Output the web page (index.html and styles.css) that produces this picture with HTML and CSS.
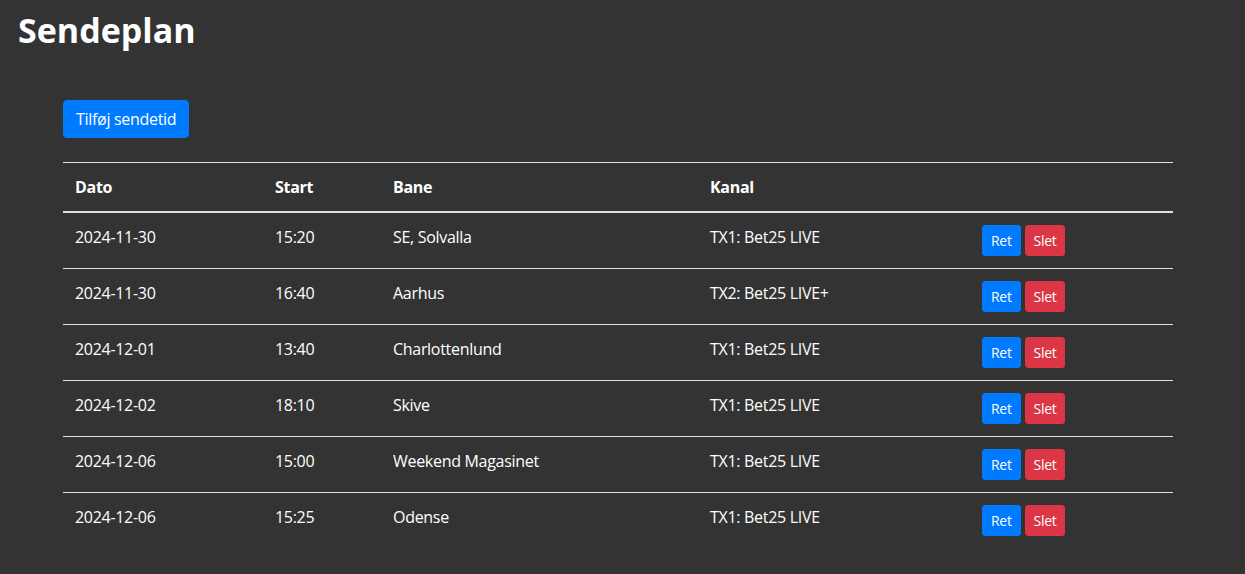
FILE: index.html
```html
<!DOCTYPE html>
<html lang="da">
<head>
<meta charset="utf-8">
<title>Sendeplan</title>
<link rel="stylesheet" href="styles.css">
</head>
<body>
<header class="page-header">
  <h1 class="page-title">Sendeplan</h1>
</header>
<main class="content">
  <div class="toolbar">
    <button class="btn btn-primary">Tilføj sendetid</button>
  </div>
  <table class="schedule">
    <colgroup>
      <col class="c-date"><col class="c-start"><col class="c-track"><col class="c-channel"><col class="c-actions">
    </colgroup>
    <thead>
      <tr><th>Dato</th><th>Start</th><th>Bane</th><th>Kanal</th><th></th></tr>
    </thead>
    <tbody>
      <tr><td>2024-11-30</td><td>15:20</td><td>SE, Solvalla</td><td>TX1: Bet25 LIVE</td><td class="actions"><button class="btn-sm btn-primary">Ret</button><button class="btn-sm btn-danger">Slet</button></td></tr>
      <tr><td>2024-11-30</td><td>16:40</td><td>Aarhus</td><td>TX2: Bet25 LIVE+</td><td class="actions"><button class="btn-sm btn-primary">Ret</button><button class="btn-sm btn-danger">Slet</button></td></tr>
      <tr><td>2024-12-01</td><td>13:40</td><td>Charlottenlund</td><td>TX1: Bet25 LIVE</td><td class="actions"><button class="btn-sm btn-primary">Ret</button><button class="btn-sm btn-danger">Slet</button></td></tr>
      <tr><td>2024-12-02</td><td>18:10</td><td>Skive</td><td>TX1: Bet25 LIVE</td><td class="actions"><button class="btn-sm btn-primary">Ret</button><button class="btn-sm btn-danger">Slet</button></td></tr>
      <tr><td>2024-12-06</td><td>15:00</td><td>Weekend Magasinet</td><td>TX1: Bet25 LIVE</td><td class="actions"><button class="btn-sm btn-primary">Ret</button><button class="btn-sm btn-danger">Slet</button></td></tr>
      <tr><td>2024-12-06</td><td>15:25</td><td>Odense</td><td>TX1: Bet25 LIVE</td><td class="actions"><button class="btn-sm btn-primary">Ret</button><button class="btn-sm btn-danger">Slet</button></td></tr>
    </tbody>
  </table>
</main>
</body>
</html>
```

FILE: styles.css
```css
* { box-sizing: border-box; }
html, body { margin: 0; padding: 0; }
body {
  background: #333333;
  color: #ffffff;
  font-family: "Open Sans", "Noto Sans", sans-serif;
  font-size: 16px;
  line-height: 24px;
  letter-spacing: -0.3px;
  height: 574px;
  overflow: hidden;
}
.page-header { padding: 10px 18px 0; }
.page-title {
  margin: 0;
  font-family: "Open Sans", sans-serif;
  font-weight: 700;
  font-size: 34px;
  line-height: 40px;
  letter-spacing: 0;
}
.content {
  margin: 50px 0 0 63px;
  width: 1110px;
}
.toolbar { margin-bottom: 24px; }
.btn {
  font-family: inherit;
  font-size: 16px;
  line-height: 24px;
  letter-spacing: -0.3px;
  padding: 6px 12px;
  border: 1px solid transparent;
  border-radius: 4px;
  color: #fff;
  cursor: pointer;
}
.btn-sm {
  font-family: inherit;
  font-size: 14px;
  line-height: 21px;
  letter-spacing: -0.3px;
  padding: 4px 8px;
  border: 1px solid transparent;
  border-radius: 3px;
  color: #fff;
  cursor: pointer;
  margin-right: 4px;
  vertical-align: top;
}
.btn-primary { background: #007bff; border-color: #007bff; }
.btn-danger { background: #dc3545; border-color: #dc3545; }
.schedule {
  width: 1110px;
  border-collapse: collapse;
  table-layout: fixed;
}
.c-date { width: 200px; }
.c-start { width: 118px; }
.c-track { width: 317px; }
.c-channel { width: 272px; }
.c-actions { width: 203px; }
.schedule th, .schedule td {
  padding: 12px;
  text-align: left;
  vertical-align: top;
  border-top: 1px solid #dee2e6;
}
.schedule th {
  font-weight: 700;
  border-bottom: 2px solid #dee2e6;
}
.schedule tbody tr:first-child td { border-top: 0; }
.actions { white-space: nowrap; }
```
